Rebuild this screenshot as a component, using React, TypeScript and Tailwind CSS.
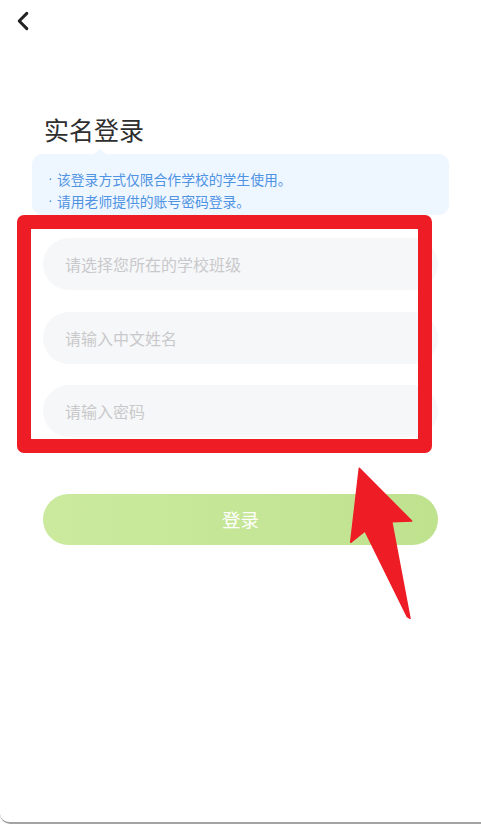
import React from "react";

export default function App() {
  const font = { fontFamily: '"Noto Sans CJK SC", "Noto Sans", sans-serif' };
  const dotFont = { fontFamily: '"Liberation Sans", sans-serif' };
  return (
    <div
      className="relative w-[481px] h-[824px] overflow-hidden bg-white border-b-2 border-[#a3a3a3] rounded-bl-[10px]"
      style={font}
    >
      {/* header */}
      <div className="pl-[16px] pt-[11px] h-[31px]">
        <svg width="14" height="20" viewBox="0 0 14 20">
          <polyline
            points="10.8,2.4 3.2,10 10.8,17.6"
            fill="none"
            stroke="#222"
            strokeWidth="3"
            strokeLinecap="round"
            strokeLinejoin="round"
          />
        </svg>
      </div>

      {/* title */}
      <div className="mt-[86px] ml-[44px] text-[25px] leading-[25px] text-[#2e2e2e]">实名登录</div>

      {/* tip box */}
      <div className="relative mt-[12px] ml-[32px] w-[417px] h-[61px] rounded-[10px] bg-[#eef6ff] pt-[14px] pl-[16px] text-[13.8px] leading-[22px] text-[#4f93e3]">
        <div className="absolute left-[62px] top-[-5px] w-0 h-0 border-l-[6px] border-r-[6px] border-b-[5px] border-l-transparent border-r-transparent border-b-[#eef6ff]" />
        <div className="flex">
          <span className="w-[9px] shrink-0" style={dotFont}>·</span>
          <span>该登录方式仅限合作学校的学生使用。</span>
        </div>
        <div className="flex">
          <span className="w-[9px] shrink-0" style={dotFont}>·</span>
          <span>请用老师提供的账号密码登录。</span>
        </div>
      </div>

      {/* inputs */}
      <div className="mt-[23px] ml-[43px] w-[395px] flex flex-col gap-[21.5px]">
        {["请选择您所在的学校班级", "请输入中文姓名", "请输入密码"].map((t) => (
          <div
            key={t}
            className="h-[52px] rounded-full bg-[#f6f7f9] flex items-center pl-[22px] text-[16px] text-[#c9c9cb]"
          >
            {t}
          </div>
        ))}
      </div>

      {/* button */}
      <div className="mt-[57px] ml-[43px] w-[395px] h-[51px] rounded-full bg-gradient-to-r from-[#cbea9e] to-[#bfe28f] flex items-center justify-center text-[18.5px] text-white">
        登录
      </div>

      {/* red annotation frame */}
      <div className="absolute left-[17px] top-[215px] w-[415px] h-[238px] border-[14px] border-[#ee1c25] rounded-[7px]" />

      {/* red arrow */}
      <svg className="absolute left-[340px] top-[460px]" width="80" height="170" viewBox="0 0 80 170">
        <polygon
          points="19.3,8.3 71.7,61 51.7,61.7 70,158.3 67.3,156.7 25,71 10.7,82.3"
          fill="#ee1c25"
          stroke="#ee1c25"
          strokeWidth="1.5"
          strokeLinejoin="round"
        />
      </svg>
    </div>
  );
}
